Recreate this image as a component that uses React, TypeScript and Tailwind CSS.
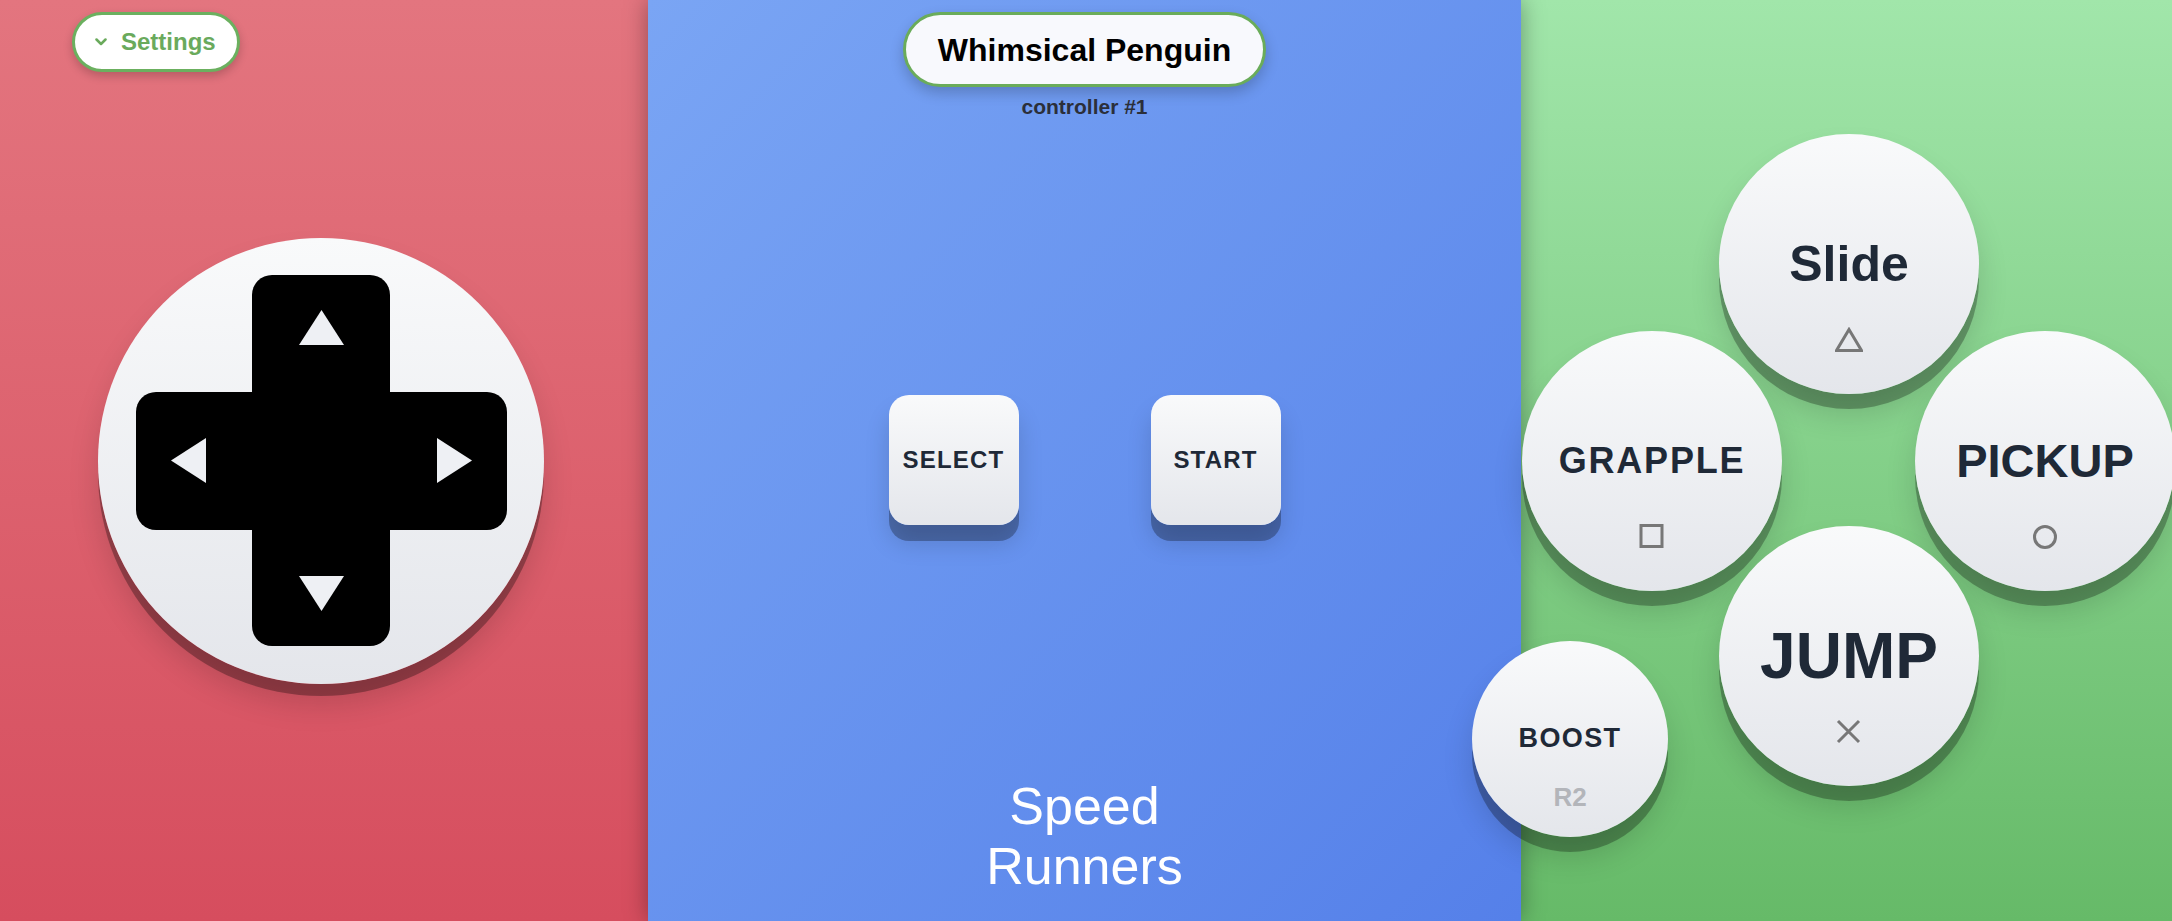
import React from "react";

const font = "font-['Liberation_Sans',Arial,sans-serif]";

const Arrow: React.FC<{ dir: "up" | "down" | "left" | "right" }> = ({ dir }) => {
    const vertical = dir === "up" || dir === "down";
    const w = vertical ? 45 : 35;
    const h = vertical ? 35 : 45;
    const points = {
        up: "22.5,0 45,35 0,35",
        down: "0,0 45,0 22.5,35",
        left: "0,22.5 35,0 35,45",
        right: "0,0 35,22.5 0,45",
    }[dir];
    return (
        <svg width={w} height={h} viewBox={`0 0 ${w} ${h}`}>
            <polygon points={points} fill="#eef0f4" />
        </svg>
    );
};

const DPad = () => (
    <div className="w-[446px] h-[446px] rounded-full bg-linear-to-b from-[#f9fafb] to-[#e4e6eb] shadow-[0_12px_0_rgba(0,0,0,0.3),0_20px_30px_rgba(0,0,0,0.15)] flex items-center justify-center">
        <div className="grid grid-cols-[116.5px_138px_116.5px] grid-rows-[116.5px_138px_116.5px]">
            <div className="col-start-2 row-start-1 row-end-4 bg-black rounded-[20px] flex flex-col items-center justify-between py-[35px]">
                <Arrow dir="up" />
                <Arrow dir="down" />
            </div>
            <div className="row-start-2 col-start-1 col-end-4 bg-black rounded-[20px] flex items-center justify-between px-[35px]">
                <Arrow dir="left" />
                <Arrow dir="right" />
            </div>
        </div>
    </div>
);

const SquareButton: React.FC<{ label: string }> = ({ label }) => (
    <button className="w-[130px] h-[130px] rounded-[20px] bg-linear-to-b from-[#f9fafb] to-[#e4e6eb] shadow-[0_16px_0_rgba(0,0,0,0.28),0_18px_25px_rgba(0,0,0,0.15)] flex items-center justify-center text-[24px] font-bold tracking-wider text-[#1f2937]">
        {label}
    </button>
);

const Symbol: React.FC<{ kind: "triangle" | "square" | "circle" | "cross" }> = ({ kind }) => (
    <svg width="28" height="26" viewBox="0 0 28 26" fill="none" stroke="#777" strokeWidth="3">
        {kind === "triangle" && <polygon points="14,2.5 26.5,23.5 1.5,23.5" strokeLinejoin="miter" />}
        {kind === "square" && <rect x="3" y="1.5" width="21" height="21" />}
        {kind === "circle" && <circle cx="14" cy="13" r="10.5" />}
        {kind === "cross" && <path d="M3 2 L24 23 M24 2 L3 23" />}
    </svg>
);

interface FaceProps {
    label: string;
    symbol: "triangle" | "square" | "circle" | "cross";
    pos: string;
    text: string;
}

const FaceButton: React.FC<FaceProps> = ({ label, symbol, pos, text }) => (
    <button className={`absolute ${pos} w-[260px] h-[260px] rounded-full bg-linear-to-b from-[#f9fafb] to-[#e4e6eb] shadow-[0_15px_0_rgba(0,0,0,0.28),0_20px_30px_rgba(0,0,0,0.15)] flex items-center justify-center`}>
        <span className={`font-bold text-[#1f2937] leading-none ${text}`}>{label}</span>
        <span className="absolute left-1/2 -translate-x-1/2 top-[193px]">
            <Symbol kind={symbol} />
        </span>
    </button>
);

export default function App() {
    return (
        <div className={`flex h-[921px] w-full overflow-hidden ${font}`}>
            {/* Left: d-pad */}
            <div className="relative w-[648px] shrink-0 bg-linear-to-b from-[#e3757f] to-[#d64d5e]">
                <button className="absolute left-[72px] top-[12px] h-[60px] w-[168px] rounded-full border-[3px] border-[#6bb05f] bg-white shadow-[0_4px_10px_rgba(0,0,0,0.2)] flex items-center pl-[20px] gap-[14px]">
                    <svg width="12" height="8" viewBox="0 0 12 8" fill="none" stroke="#6aaa5c" strokeWidth="2.5" strokeLinecap="round" strokeLinejoin="round">
                        <path d="M1.5 1.5 L6 6 L10.5 1.5" />
                    </svg>
                    <span className="text-[24px] font-bold text-[#6aaa5c]">Settings</span>
                </button>
                <div className="h-full flex items-center justify-center pr-[6px]">
                    <DPad />
                </div>
            </div>

            {/* Middle */}
            <div className="relative z-10 flex-1 flex flex-col items-center bg-linear-to-br from-[#7aa5f4] to-[#5580e9] shadow-[0_0_22px_rgba(0,0,0,0.35)]">
                <div className="mt-[12px] h-[75px] px-[32px] rounded-full border-[3px] border-[#6aac5a] bg-[#f8f9fd] shadow-[0_6px_14px_rgba(0,0,0,0.2)] flex items-center">
                    <span className="text-[32px] font-bold text-black">Whimsical Penguin</span>
                </div>
                <div className="mt-[6px] text-[21px] leading-[28px] font-bold text-[#2b2f3a]">controller #1</div>
                <div className="flex-1 flex items-center justify-center gap-[132px] pt-[23px]">
                    <SquareButton label="SELECT" />
                    <SquareButton label="START" />
                </div>
                <div className="pb-[25px] text-center text-[52px] leading-[60px] text-white">
                    Speed<br />Runners
                </div>
            </div>

            {/* Right: face buttons */}
            <div className="w-[651px] shrink-0 bg-linear-to-b from-[#a1e6aa] to-[#66ba68] flex items-center">
                <div className="relative z-20 ml-[1px] w-[654px] h-[654px] shrink-0">
                    <FaceButton label="Slide" symbol="triangle" pos="left-[197px] top-0" text="text-[50px]" />
                    <FaceButton label="GRAPPLE" symbol="square" pos="left-0 top-[197px]" text="text-[36px] tracking-wider" />
                    <FaceButton label="PICKUP" symbol="circle" pos="left-[393px] top-[197px]" text="text-[47px]" />
                    <FaceButton label="JUMP" symbol="cross" pos="left-[197px] top-[392px]" text="text-[64px]" />
                    <button className="absolute left-[-50px] top-[507px] w-[196px] h-[196px] rounded-full bg-linear-to-b from-[#f9fafb] to-[#e4e6eb] shadow-[0_15px_0_rgba(0,0,0,0.28),0_20px_30px_rgba(0,0,0,0.15)] flex items-center justify-center">
                        <span className="text-[27px] font-bold tracking-wider leading-none text-[#1f2937]">BOOST</span>
                        <span className="absolute left-1/2 -translate-x-1/2 top-[143px] text-[26px] leading-none font-bold text-[#b3b5ba]">R2</span>
                    </button>
                </div>
            </div>
        </div>
    );
}
